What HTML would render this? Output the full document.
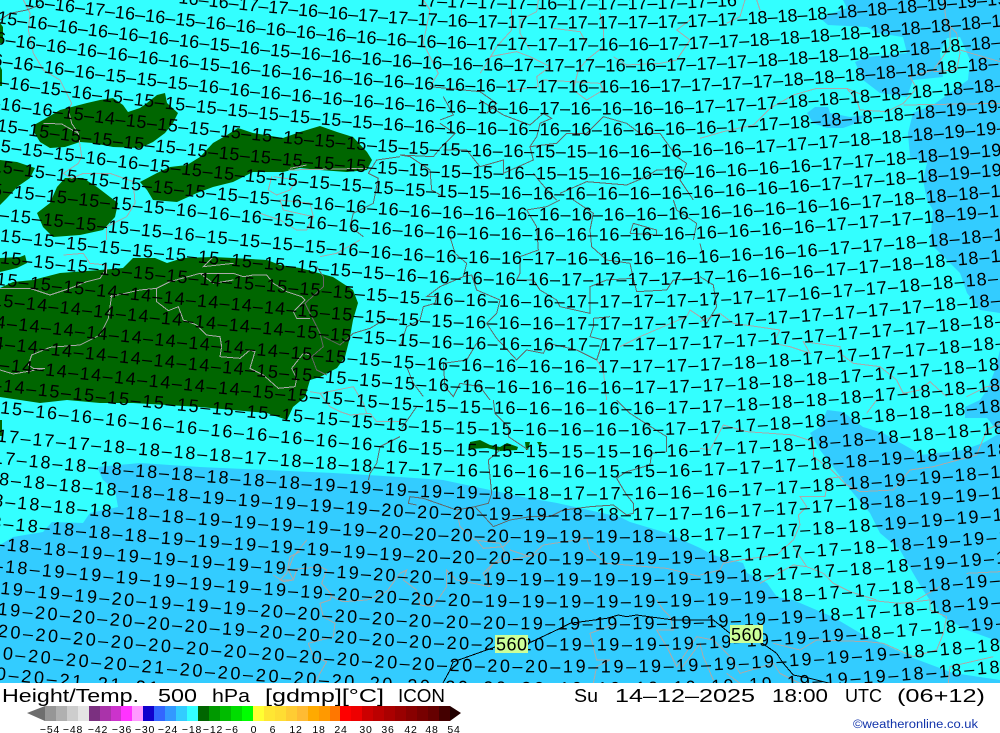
<!DOCTYPE html>
<html><head><meta charset="utf-8"><title>Height/Temp. 500 hPa ICON</title>
<style>
html,body{margin:0;padding:0;background:#fff;width:1000px;height:733px;overflow:hidden}
svg{display:block;font-family:"Liberation Sans",sans-serif}
.r text{font-size:18px;fill:#000}
.b{font-size:18px;fill:#000}
.l{font-size:10.5px;letter-spacing:.8px;text-anchor:middle;fill:#000}
.lt,.dk,.k{fill:none;stroke-width:3}
.lt{stroke:#aaa}.dk{stroke:#666}.k{stroke:#000}
</style></head><body>
<svg width="1000" height="733" viewBox="0 0 1000 733" xmlns="http://www.w3.org/2000/svg">
<defs>
<path id="a" d="M-40,-53C100,-31 300,-10 410,-3C470,1 600,2 680,0C770,-3 880,-12 1060,-28"/>
<path id="b" d="M-40,-48C100,-31 300,-11 410,-3C470,1 600,2 680,0C770,-3 880,-12 1060,-28"/>
<path id="c" d="M-40,-39C80,-25 280,-10 410,-2C470,1 600,2 680,0C770,-3 880,-10 1060,-26"/>
<clipPath id="m"><rect width="1000" height="683"/></clipPath>
</defs>
<g clip-path="url(#m)">
<rect width="1000" height="683" fill="#33ffff"/>
<g fill="#33ccff">
<polygon points="0,545 13,537 43,532 52,522 83,523 90,513 118,507 115,490 103,480 97,467 140,463 200,467 267,470 333,473 400,477 443,480 490,490 523,497 557,503 620,517 630,522 667,533 700,548 713,555 743,563 747,573 767,583 777,597 793,600 833,617 860,633 913,658 953,673 1000,680 1000,683 0,683"/>
<polygon points="843,0 847,8 820,18 828,25 867,27 877,33 903,37 907,53 867,57 855,62 863,80 880,93 907,97 913,80 943,77 940,53 947,38 960,37 970,60 968,80 933,105 913,113 908,133 910,157 927,163 923,180 927,200 933,210 930,243 960,273 967,293 980,310 1000,313 1000,0"/>
<polygon points="807,113 815,107 828,107 830,113 850,117 867,115 857,123 843,128 827,128 813,123"/>
<polygon points="1000,350 995,370 987,390 980,400 965,407 965,418 987,418 995,428 1000,433"/>
<polygon points="1000,433 983,443 963,450 920,455 913,450 883,433 863,427 843,412 827,410 820,427 810,433 820,450 843,480 853,493 870,513 880,533 900,550 913,573 923,590 930,600 943,617 967,630 1000,642"/>
</g>
<g fill="#006600">
<polygon points="34,125 43,120 60,110 87,103 100,100 113,98 123,105 128,112 140,108 147,103 157,95 165,93 167,103 178,113 173,123 165,133 153,142 140,148 113,147 93,143 80,142 65,147 50,148 40,142 34,132"/>
<polygon points="140,182 157,173 170,167 187,165 200,157 213,143 227,135 238,128 253,133 283,138 300,132 320,126 337,132 353,137 367,152 372,160 367,170 347,172 320,170 300,168 283,172 253,172 233,182 213,187 197,193 177,202 153,200 147,190"/>
<polygon points="37,213 50,203 57,187 65,178 83,178 97,187 110,197 118,203 115,217 103,230 80,235 53,237 43,227"/>
<polygon points="0,160 17,162 35,168 30,178 17,187 7,198 0,205"/>
<polygon points="0,23 3,27 3,43 0,43"/>
<polygon points="0,66 2,70 2,86 0,86"/>
<polygon points="0,258 20,257 25,255 27,263 17,268 0,272"/>
<polygon points="0,420 2,420 2,436 0,436"/>
<polygon points="0,288 13,282 33,280 60,273 100,270 123,268 133,258 155,258 167,263 183,258 213,257 233,258 267,260 280,265 300,268 333,277 353,290 358,303 353,320 350,337 345,357 337,368 320,377 310,380 305,397 293,407 287,420 267,413 233,410 200,407 167,405 133,403 100,403 67,400 40,403 20,400 0,397"/>
<polygon points="470,442 480,440 490,445 500,447 507,443 518,447 517,450 500,451 487,448 470,449"/>
<polygon points="525,442 530,442 528,450 526,450"/>
<polygon points="537,442 542,442 540,447"/>
</g>
<g shape-rendering="crispEdges">
<g transform="scale(.33333)">
<path class="lt" d="M70 0 90 40 85 90 100 160 130 210 180 240 205 290 215 310 205 330 215 370 235 400 245 470 235 490 190 520 215 535 250 520 330 520 400 545 405 610 380 650 320 680 320 720M130 370 185 372 235 400M815 530 805 570 830 585 870 570 890 540 820 530M780 640 840 660 890 690 920 690 940 650 850 630 840 600 930 610 940 650M870 505 920 495M865 510 1100 505"/>
<path class="dk" d="M0 60 30 40 80 30 120 15M1200 470 1130 480 1105 520 1135 535 1120 610 1060 640 1050 680 1090 710"/>
</g>
<g transform="translate(0,240) scale(.33333)">
<path class="lt" d="M0 145 90 145 150 165 210 145 260 125 300 115 320 85M330 170 420 150 470 145 510 125 600 100 700 100 730 110 760 105 800 105 820 130 860 155 905 170 915 180 880 215 890 235 930 235M335 165 325 235 300 285 240 315 150 322 95 345 85 375 100 385 135 385 40 402 0 390M470 145 470 185 505 212 535 200 550 240 590 255 620 285 660 290 665 320 660 350 720 355 750 330 765 335 750 385 790 405 835 445 885 440 890 415 875 385 910 340 930 345M930 455 960 460 990 500 1020 515 1050 525 1110 520 1130 545 1200 545M960 460 1060 440 1090 490 1100 520M960 50 1010 40 1080 0M190 45 250 40 270 70 320 75 320 100M640 50 610 80 700 70M600 100 640 130 700 120"/>
<path class="dk" d="M950 80 970 110 970 140 915 190 935 230 960 280 970 320 935 350 950 390 980 405M970 290 1020 315 1060 280 1110 265 1160 235 1200 240M1200 590 1140 620 1130 670 1110 700 1105 720"/>
</g>
<g transform="translate(400,0) scale(.33333)">
<path class="lt" d="M70 0 90 30 70 130 90 170 115 220 90 260M335 0 335 90 290 140 260 190 240 220M415 0 410 35 360 60 360 100 390 150M270 170 350 155 390 170 450 200 410 230 415 260 340 270 320 240M600 40 610 90 610 140 560 180 535 210 520 270 560 300 610 270 600 250 430 240M460 85 540 95 560 130M640 170 680 195 780 190 830 180 870 120 830 90 870 60"/>
<path class="dk" d="M90 260 240 275 290 310 260 340M120 360 160 345 130 290M120 370 165 400 125 440 100 470 0 465 30 470 90 510 95 570 130 590M130 450 200 450 240 500 310 480 310 520 400 480 390 440 470 430 500 400 560 400 610 350 680 370 720 400 780 400 830 470 860 490 840 540 860 570 880 600M240 300 310 345 390 375 430 340 455 355 420 370 410 410 390 440M400 520 420 545 450 580 470 600M480 580 560 545 680 555 740 530 770 510 840 510"/>
</g>
<g transform="translate(700,0) scale(.33333)">
<path class="lt" d="M0 415 70 395 160 375 210 325 280 285 350 265 440 265 470 300 480 330 560 335 610 310 650 265 630 230 700 210 750 140 750 80M440 265 500 290M610 315 900 310M730 0 740 70 770 100 780 160 770 210 700 215M780 150 900 185M135 0 120 50 80 70M170 0 180 30"/>
</g>
<g transform="translate(400,200) scale(.33333)">
<path class="dk" d="M380 30 440 20 480 0M380 30 410 80 415 150 360 170 360 220 350 240 400 240 420 270 470 300 480 320 570 340 570 260 620 240 700 235 710 275 800 270 820 240 890 235M520 0 580 40 570 90 575 140 620 180 690 190 700 235M690 100 700 70 770 90 770 105 690 100M150 110 165 160 200 190 190 230 120 260 80 290 110 290 105 310 70 320 60 360 20 380 0 440M190 230 215 225 230 270 300 300 290 340 260 370 280 400 290 415 350 480 380 450 430 460 445 430 530 450 590 480 610 420 570 410 580 380 580 355 630 350M820 0 830 30 890 70 880 120M230 430 200 480 130 490 135 560 160 590 180 550 240 560 270 600M20 500 40 550 70 590"/>
<path class="lt" d="M590 480 610 510 620 600M660 440 720 410 790 380 860 350 870 330 900 350"/>
</g>
<g transform="translate(700,200) scale(.33333)">
<path class="lt" d="M0 365 60 340 100 370 170 380 240 390 220 430 270 440 330 460 310 425 420 440 420 460 460 490 540 500 590 540 610 580 660 570 690 545 740 590M800 590 860 560 900 560"/>
<path class="dk" d="M0 130 10 170M0 230 40 255 50 320 20 370 0 350"/>
</g>
<g transform="translate(400,400) scale(.33333)">
<path class="dk" d="M50 20 5 85M280 0 285 40 325 80 325 110 355 130 385 150M300 150 265 180 275 280 265 310 225 320 170 330 70 295 30 290 25 310 50 315M225 320 280 380 330 360 390 350 450 350 490 330 570 320 640 315 680 345 700 340 700 310 680 285 650 235 680 215 750 195 755 160 800 155 800 110 760 85 690 40 650 0"/>
<path class="lt" d="M170 330 180 380 225 420 300 430 320 465 280 490 260 520M330 450 390 470 430 435 560 415 570 450 620 490 800 505 900 530"/>
</g>
<g transform="translate(700,400) scale(.33333)">
<path class="lt" d="M0 145 30 150 70 75 140 95 280 105 340 125 340 170 395 210 440 255 480 275 580 270 630 210 700 200 830 165 860 90 900 70M500 40 530 0M430 230 385 235 375 290 300 290 320 320 295 345 300 375 280 420 230 465 120 480 70 490 60 510 0 525M280 440 320 500 370 520 400 550 450 575 530 600M180 550 280 495 320 500M650 600 720 560M800 520 900 515"/>
</g>
<g transform="translate(0,480) scale(.33333)">
<path class="lt" d="M900 215 870 230 860 280 840 300 880 300 890 270"/>
</g>
<g transform="translate(250,540) scale(.33333)">
<path class="lt" d="M170 0 130 50 115 90 130 120 100 125 70 105M115 90 210 80 230 90 215 130 245 165 240 180 210 190 220 230 255 250 250 290 175 310 190 350 230 365 210 400 195 429M245 170 280 185 350 180 410 155 450 100 470 90 460 120 500 150 510 195 550 200 590 140 590 90 620 120 720 140 700 100 730 70 830 50 870 40M680 0 700 25 760 20 780 0"/>
</g>
<g transform="translate(500,600) scale(.33333)">
<path class="lt" d="M1100 0 1200 10 1290 0 1290 30 1340 50 1330 100 1310 150 1240 170 1150 130 1100 125 950 120 900 150 820 130M1480 170 1350 200 1345 250M470 0 490 30 510 50 520 90 470 90 500 140 530 200 590 110 640 120 690 170 720 220 820 190 840 220 900 250M350 70 270 100 290 180 330 180 290 200 280 250M540 210 600 130 610 170 640 240M680 220 720 250"/>
<path class="k" d="M85 130 170 90 210 70 320 55 355 45 380 50 410 45 520 60 640 60 690 100M780 125 830 160 850 190 880 225 930 235 990 250"/>
</g>
<path class="k" style="stroke-width:1" d="M495 647 453 662 450 670 443 683"/>
</g>
<g class="r">
<text transform="translate(0,8.5)"><textPath href="#a" startOffset="460">17–17–17–17–16–17–17–17–17–17–16</textPath></text>
<text transform="translate(0,27.5)"><textPath href="#a" startOffset="220">16–16–17–17–16–16–17–17–17–16–17–17–17–17–17–17–17–17–17–18–18–18–18–18–18–19–19–19–19</textPath></text>
<text transform="translate(0,49.5)" style="letter-spacing:.09px"><textPath href="#a" startOffset="65">16–16–17–16–16–15–16–16–16–16–16–16–16–16–16–17–17–17–17–16–16–17–17–17–18–18–18–18–18–18–18–18–18–18–18</textPath></text>
<text transform="translate(0,70.5)" style="letter-spacing:.17px"><textPath href="#a" startOffset="37">15–16–16–16–16–16–16–15–16–15–16–16–16–16–16–16–16–17–17–17–16–16–17–17–17–18–18–18–18–18–18–18–18–18–18</textPath></text>
<text transform="translate(0,91.5)" style="letter-spacing:.26px"><textPath href="#a" startOffset="25">16–16–16–16–16–16–16–15–16–16–16–16–16–16–16–16–16–17–17–16–16–16–17–17–17–17–18–18–18–18–18–18–18–18</textPath></text>
<text transform="translate(0,113.5)" style="letter-spacing:.35px"><textPath href="#a" startOffset="22">16–16–16–16–15–15–15–16–16–16–16–16–16–16–16–16–16–16–17–16–16–16–16–17–17–17–18–18–18–18–18–18–18–19</textPath></text>
<text transform="translate(0,134.5)" style="letter-spacing:.43px"><textPath href="#a" startOffset="18">16–16–15–16–15–15–15–15–15–15–15–15–15–16–16–16–16–16–16–16–16–16–16–16–17–17–18–18–18–18–18–19–19–19</textPath></text>
<text transform="translate(0,156.5)" style="letter-spacing:.52px"><textPath href="#a" startOffset="9">15–16–16–15–14–15–15–15–15–15–15–15–15–15–15–15–16–16–15–15–16–16–16–16–16–17–17–17–18–18–18–19–19–19</textPath></text>
<text transform="translate(0,178.5)" style="letter-spacing:.6px"><textPath href="#a" startOffset="37">15–15–15–15–15–15–15–15–15–15–15–15–15–15–15–15–16–15–15–16–16–16–16–16–16–16–17–17–18–18–19–19–19</textPath></text>
<text transform="translate(0,198.5)" style="letter-spacing:.69px"><textPath href="#a" startOffset="30">15–15–15–16–16–15–15–15–15–15–15–15–15–15–15–15–16–16–16–16–16–16–16–16–16–16–17–17–18–18–19–19–19</textPath></text>
<text transform="translate(0,219.5)" style="letter-spacing:.77px"><textPath href="#a" startOffset="32">15–15–15–15–15–15–15–15–15–16–16–16–16–16–16–16–16–16–16–16–16–16–16–16–16–16–16–17–18–18–18–19</textPath></text>
<text transform="translate(0,239.5)" style="letter-spacing:.85px"><textPath href="#b" startOffset="21">15–15–15–15–15–15–16–16–16–15–16–16–16–16–16–16–16–16–16–16–16–16–16–16–16–16–17–17–17–18–19–19–19</textPath></text>
<text transform="translate(0,263.5)" style="letter-spacing:.95px"><textPath href="#b" startOffset="17">16–15–15–15–15–15–16–15–15–15–15–16–16–16–16–16–16–17–16–16–16–16–16–16–16–16–17–17–18–18–18–18</textPath></text>
<text transform="translate(0,284.5)" style="letter-spacing:1.03px"><textPath href="#b" startOffset="40">15–15–15–15–15–15–15–15–15–15–15–15–16–16–16–16–16–17–17–17–17–17–16–16–16–17–17–18–18–18–18</textPath></text>
<text transform="translate(0,306.5)" style="letter-spacing:1.12px"><textPath href="#b" startOffset="40">15–15–15–15–15–15–14–15–15–15–15–15–15–16–16–16–16–17–17–17–17–17–17–17–16–17–17–18–18–18–18</textPath></text>
<text transform="translate(0,328.5)" style="letter-spacing:1.2px"><textPath href="#b" startOffset="36">15–15–15–14–14–14–14–14–14–15–15–15–15–15–16–16–16–17–17–17–17–17–17–17–17–17–17–17–18–18–18</textPath></text>
<text transform="translate(0,349.5)" style="letter-spacing:1.29px"><textPath href="#b" startOffset="32">15–14–14–14–14–14–14–14–14–15–15–15–15–16–16–16–16–17–17–17–17–17–17–17–17–17–17–17–18–18–18</textPath></text>
<text transform="translate(0,371.5)" style="letter-spacing:1.38px"><textPath href="#b" startOffset="24">14–14–14–14–14–14–14–14–14–15–15–15–15–16–16–16–16–16–17–17–17–17–18–18–17–17–17–17–18–18–18</textPath></text>
<text transform="translate(0,392.5)" style="letter-spacing:1.46px"><textPath href="#b" startOffset="22">14–14–14–14–14–14–14–14–15–15–15–15–15–16–16–16–16–16–16–17–17–17–18–18–18–17–17–17–18–18–18</textPath></text>
<text transform="translate(0,413.5)" style="letter-spacing:1.55px"><textPath href="#b" startOffset="16">14–14–14–14–14–14–14–14–15–15–15–15–15–15–15–16–16–16–16–16–17–17–18–18–18–18–17–18–18–18–18</textPath></text>
<text transform="translate(0,434.5)" style="letter-spacing:1.63px"><textPath href="#b" startOffset="8">14–14–15–15–15–15–15–15–15–15–15–15–15–15–15–15–16–16–16–16–17–17–17–18–18–18–18–18–18–18–18</textPath></text>
<text transform="translate(0,456.5)" style="letter-spacing:1.72px"><textPath href="#b" startOffset="5">15–15–16–16–16–16–16–16–16–16–16–16–16–15–15–15–15–15–15–16–16–17–17–18–18–18–18–18–18–18–18</textPath></text>
<text transform="translate(0,476.5)" style="letter-spacing:1.8px"><textPath href="#c" startOffset="37">17–17–17–18–18–18–18–17–18–18–18–17–17–16–16–16–16–15–15–16–17–17–17–18–18–19–18–18–18–18</textPath></text>
<text transform="translate(0,498.5)" style="letter-spacing:1.89px"><textPath href="#c" startOffset="33">17–18–18–18–18–18–18–18–18–19–19–19–19–19–18–18–17–17–16–16–16–17–17–18–18–19–19–18–18</textPath></text>
<text transform="translate(0,519.5)" style="letter-spacing:1.97px"><textPath href="#c" startOffset="27">18–18–18–18–18–18–19–19–19–19–19–20–20–20–19–19–18–18–17–17–16–17–17–17–18–18–19–19–19</textPath></text>
<text transform="translate(0,541.5)" style="letter-spacing:2.06px"><textPath href="#c" startOffset="21">18–18–18–18–18–18–19–19–19–19–19–20–20–20–20–19–19–19–18–18–17–17–17–18–18–19–19–19–19</textPath></text>
<text transform="translate(0,563.5)" style="letter-spacing:2.15px"><textPath href="#c" startOffset="19">18–18–18–18–18–19–19–19–19–19–19–19–20–20–20–20–19–19–19–19–18–17–17–17–18–18–19–19–19</textPath></text>
<text transform="translate(0,584.5)" style="letter-spacing:2.23px"><textPath href="#c" startOffset="10">18–18–18–19–19–19–19–19–19–19–19–20–20–19–19–19–19–19–19–19–19–18–17–17–18–18–19–19–19</textPath></text>
<text transform="translate(0,606.5)" style="letter-spacing:2.32px"><textPath href="#c" startOffset="8">18–18–19–19–19–19–19–19–19–19–20–20–20–20–19–19–19–19–19–19–19–19–18–17–17–18–18–19–19</textPath></text>
<text transform="translate(0,628.5)" style="letter-spacing:2.41px"><textPath href="#c" startOffset="3">19–19–19–19–20–19–19–19–20–20–20–20–20–20–20–19–19–19–19–19–19–19–19–18–17–18–18–19–19</textPath></text>
<text transform="translate(0,649.5)" style="letter-spacing:2.49px"><textPath href="#c" startOffset="0">19–19–20–20–20–20–20–19–20–20–20–20–20–20–20–20–19–19–19–19–19–19–19–19–18–17–18–19–19</textPath></text>
<text transform="translate(0,671.5)" style="letter-spacing:2.58px"><textPath href="#c" startOffset="0">20–20–20–20–20–20–20–20–20–20–20–20–20–20–20–20–19–19–19–19–19–19–19–19–19–18–18–18–18</textPath></text>
<text transform="translate(0,693.5)" style="letter-spacing:2.67px"><textPath href="#c" startOffset="30">20–20–20–20–21–20–20–20–20–20–20–20–20–20–20–19–19–19–19–19–19–19–19–19–18–18–18–18</textPath></text>
<text transform="translate(0,714.5)" style="letter-spacing:2.75px"><textPath href="#c" startOffset="23">20–20–21–21–21–20–20</textPath></text>
</g>
<rect x="495" y="635" width="33" height="18" fill="#ccff99"/>
<text x="496" y="650.5" font-size="18" fill="#000" textLength="31">560</text>
<rect x="730" y="625" width="33" height="18" fill="#ccff99"/>
<text x="731" y="641" font-size="18" fill="#000" textLength="31">560</text>
</g>
<text class="b" x="2" y="702" textLength="137" lengthAdjust="spacingAndGlyphs">Height/Temp.</text>
<text class="b" x="158" y="702" textLength="39" lengthAdjust="spacingAndGlyphs">500</text>
<text class="b" x="212" y="702" textLength="38" lengthAdjust="spacingAndGlyphs">hPa</text>
<text class="b" x="265" y="702" textLength="119" lengthAdjust="spacingAndGlyphs">[gdmp][°C]</text>
<text class="b" x="398" y="702" textLength="47" lengthAdjust="spacingAndGlyphs">ICON</text>
<text class="b" x="574" y="702" textLength="24" lengthAdjust="spacingAndGlyphs">Su</text>
<text class="b" x="615" y="702" textLength="140" lengthAdjust="spacingAndGlyphs">14–12–2025</text>
<text class="b" x="772" y="702" textLength="56" lengthAdjust="spacingAndGlyphs">18:00</text>
<text class="b" x="845" y="702" textLength="37" lengthAdjust="spacingAndGlyphs">UTC</text>
<text class="b" x="897" y="702" textLength="88" lengthAdjust="spacingAndGlyphs">(06+12)</text>
<g shape-rendering="crispEdges">
<polygon points="27,713 45,706 45,721" fill="#6e6e6e" shape-rendering="auto"/>
<rect x="45" y="706" width="11" height="15" fill="#969696"/><rect x="56" y="706" width="11" height="15" fill="#b0b0b0"/><rect x="67" y="706" width="11" height="15" fill="#cdcdcd"/><rect x="78" y="706" width="11" height="15" fill="#e4e4e4"/>
<rect x="89" y="706" width="11" height="15" fill="#7b3080"/><rect x="100" y="706" width="11" height="15" fill="#aa33aa"/><rect x="111" y="706" width="10" height="15" fill="#cc33cc"/><rect x="121" y="706" width="11" height="15" fill="#ff33ff"/><rect x="132" y="706" width="11" height="15" fill="#ff99ff"/>
<rect x="143" y="706" width="11" height="15" fill="#1100cc"/><rect x="154" y="706" width="11" height="15" fill="#3366ff"/><rect x="165" y="706" width="11" height="15" fill="#3399ff"/><rect x="176" y="706" width="11" height="15" fill="#33ccff"/><rect x="187" y="706" width="11" height="15" fill="#33ffff"/>
<rect x="198" y="706" width="11" height="15" fill="#006600"/><rect x="209" y="706" width="11" height="15" fill="#009900"/><rect x="220" y="706" width="11" height="15" fill="#00bb00"/><rect x="231" y="706" width="11" height="15" fill="#00dd00"/><rect x="242" y="706" width="11" height="15" fill="#00ff00"/>
<rect x="253" y="706" width="11" height="15" fill="#ffff33"/><rect x="264" y="706" width="11" height="15" fill="#ffe633"/><rect x="275" y="706" width="11" height="15" fill="#ffdd33"/><rect x="286" y="706" width="11" height="15" fill="#ffcc33"/><rect x="297" y="706" width="11" height="15" fill="#ffbb33"/>
<rect x="308" y="706" width="11" height="15" fill="#ffaa00"/><rect x="319" y="706" width="11" height="15" fill="#ff9900"/><rect x="330" y="706" width="10" height="15" fill="#ff7700"/>
<rect x="340" y="706" width="11" height="15" fill="#ff0000"/><rect x="351" y="706" width="11" height="15" fill="#ee0000"/><rect x="362" y="706" width="11" height="15" fill="#cc0000"/><rect x="373" y="706" width="11" height="15" fill="#bb0000"/><rect x="384" y="706" width="11" height="15" fill="#aa0000"/><rect x="395" y="706" width="11" height="15" fill="#990000"/><rect x="406" y="706" width="11" height="15" fill="#880000"/><rect x="417" y="706" width="11" height="15" fill="#770000"/><rect x="428" y="706" width="11" height="15" fill="#660000"/><rect x="439" y="706" width="11" height="15" fill="#440000"/>
<polygon points="450,706 461,713 450,721" fill="#220000" shape-rendering="auto"/>
</g>
<text class="l" x="50" y="733">−54</text><text class="l" x="73" y="733">−48</text><text class="l" x="98" y="733">−42</text><text class="l" x="122" y="733">−36</text><text class="l" x="145" y="733">−30</text><text class="l" x="168" y="733">−24</text><text class="l" x="192" y="733">−18</text><text class="l" x="213" y="733">−12</text><text class="l" x="232" y="733">−6</text><text class="l" x="254" y="733">0</text><text class="l" x="273" y="733">6</text><text class="l" x="296" y="733">12</text><text class="l" x="319" y="733">18</text><text class="l" x="341" y="733">24</text><text class="l" x="366" y="733">30</text><text class="l" x="388" y="733">36</text><text class="l" x="411" y="733">42</text><text class="l" x="432" y="733">48</text><text class="l" x="454" y="733">54</text>
<text x="853" y="728" font-size="11.5" fill="#1133aa" textLength="125" lengthAdjust="spacingAndGlyphs">©weatheronline.co.uk</text>
</svg>
</body></html>
